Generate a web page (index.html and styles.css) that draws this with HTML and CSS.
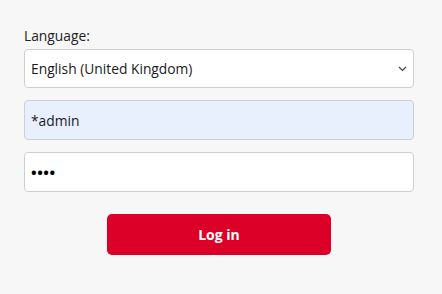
FILE: index.html
```html
<!DOCTYPE html>
<html>
<head>
<meta charset="utf-8">
<link rel="stylesheet" href="styles.css">
</head>
<body>
<form class="login">
  <label class="label" for="lang">Language:</label>
  <div class="select">
    <span class="select-text">English (United Kingdom)</span>
    <svg class="chevron" width="9" height="6" viewBox="0 0 9 6"><path d="M1 1 L4.5 4.5 L8 1" fill="none" stroke="#444" stroke-width="1.2"/></svg>
  </div>
  <div class="field field-filled">*admin</div>
  <div class="field field-pass">••••</div>
  <div class="actions">
    <button class="btn" type="button">Log in</button>
  </div>
</form>
</body>
</html>
```
FILE: styles.css
```css
html, body {
  margin: 0;
  padding: 0;
  background: #f7f7f7;
  height: 100%;
}
body {
  font-family: "Open Sans", "Noto Sans", sans-serif;
  color: #1a1a1a;
}
.login {
  display: flex;
  flex-direction: column;
  width: 390px;
  padding: 26px 0 0 24px;
}
.label {
  font-size: 13.8px;
  line-height: 20px;
  margin-bottom: 3px;
  color: #222;
}
.select, .field {
  box-sizing: border-box;
  height: 39px;
  border: 1px solid #cfcfcf;
  border-radius: 4px;
  background: #fff;
  display: flex;
  align-items: center;
  padding: 0 6px;
  font-size: 13.8px;
  color: #1a1a1a;
}
.select {
  justify-content: space-between;
  padding-right: 6px;
}
.chevron {
  margin-top: 1px;
}
.field {
  margin-top: 12px;
  height: 40px;
}
.field-filled {
  background: #e8f0fe;
}
.field-pass {
  font-size: 15px;
  letter-spacing: 0.5px;
  font-weight: 700;
  color: #000;
}
.actions {
  display: flex;
  justify-content: center;
  margin-top: 22px;
}
.btn {
  width: 224px;
  height: 41px;
  border: none;
  border-radius: 5px;
  background: #dc0028;
  color: #fff;
  font-family: "Open Sans", "Noto Sans", sans-serif;
  font-weight: 700;
  font-size: 14px;
}
```
